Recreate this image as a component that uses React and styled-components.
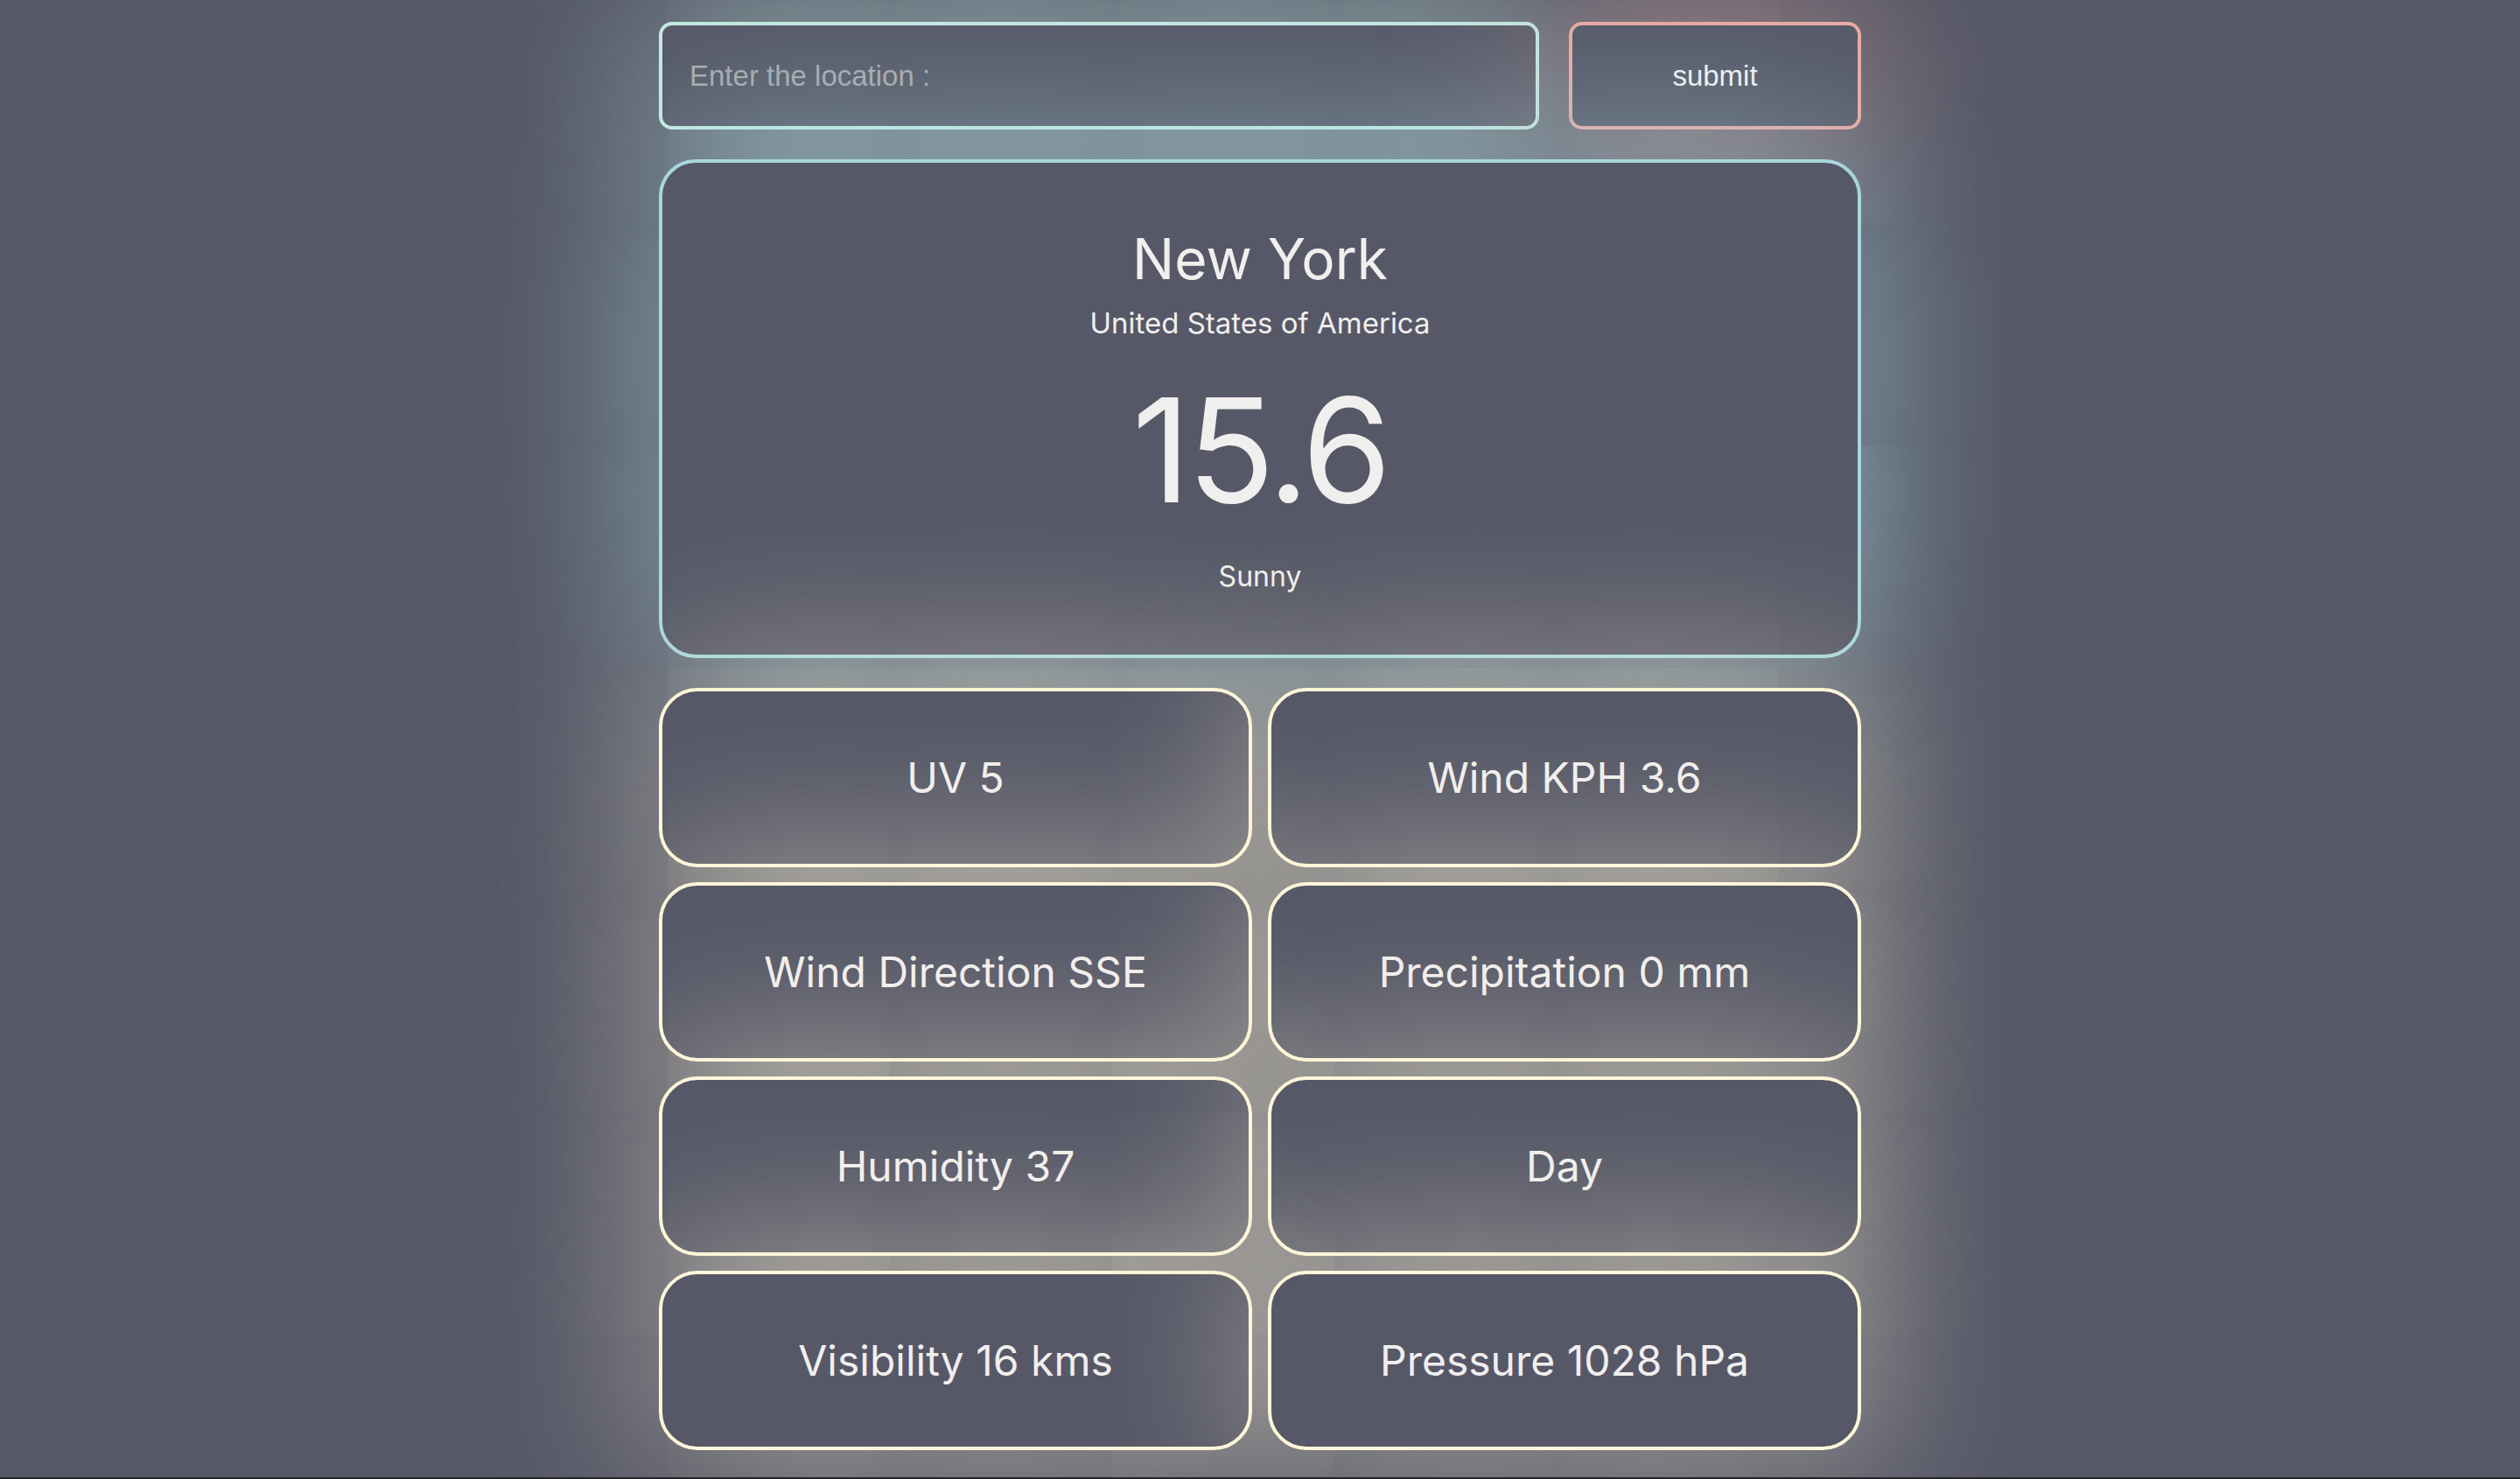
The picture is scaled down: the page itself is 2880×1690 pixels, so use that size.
import styled, { createGlobalStyle } from "styled-components";

const GlobalStyle = createGlobalStyle`
  html {
    margin: 0;
    padding: 0;
    background-color: #242428;
  }
  body {
    margin: 0;
    padding: 0;
    min-height: 1688px;
    background-color: #565867;
    font-family: "Inter", "Noto Sans", sans-serif;
    color: #f1eeee;
    overflow: hidden;
  }
`;

const Page = styled.div`
  display: flex;
  justify-content: center;
  padding-top: 25px;
`;

const Container = styled.div`
  width: 1374px;
  display: flex;
  flex-direction: column;
  gap: 34px;
`;

const SearchRow = styled.form`
  display: flex;
  gap: 34px;
  height: 123px;
`;

const LocationInput = styled.input`
  flex: 1;
  box-sizing: border-box;
  background-color: #565867;
  border: 4px solid #c3ebe1;
  border-radius: 15px;
  box-shadow: 0 0 200px rgba(195, 235, 225, 0.75);
  padding: 0 31px;
  font-family: "Liberation Sans", "Open Sans", sans-serif;
  font-size: 33px;
  color: #f1eeee;
  outline: none;
  &::placeholder {
    color: #a7a9ad;
  }
`;

const SubmitButton = styled.button`
  width: 334px;
  box-sizing: border-box;
  background-color: #565867;
  border: 4px solid #eaa9a1;
  border-radius: 15px;
  box-shadow: 0 0 200px rgba(234, 169, 161, 0.75);
  font-family: "Liberation Sans", "Open Sans", sans-serif;
  font-size: 33px;
  color: #f4f2f2;
  cursor: pointer;
`;

const MainCard = styled.section`
  height: 570px;
  box-sizing: border-box;
  background-color: #565867;
  border: 4px solid #a8d6dd;
  border-radius: 42px;
  box-shadow: 0 0 200px rgba(168, 214, 221, 0.75);
  display: flex;
  flex-direction: column;
  align-items: center;
  padding-top: 78px;
`;

const City = styled.h1`
  margin: 0;
  font-size: 64px;
  line-height: 1;
  font-weight: 400;
`;

const Country = styled.h2`
  margin: 25px 0 0;
  font-size: 33px;
  line-height: 1;
  font-weight: 400;
`;

const Temperature = styled.div`
  margin-top: 46px;
  font-size: 165px;
  line-height: 1;
  font-weight: 400;
  letter-spacing: -4px;
`;

const Condition = styled.div`
  margin-top: 46px;
  font-size: 32px;
  line-height: 1;
`;

const StatsGrid = styled.div`
  display: grid;
  grid-template-columns: 1fr 1fr;
  column-gap: 18px;
  row-gap: 17px;
`;

const StatCard = styled.div`
  height: 205px;
  box-sizing: border-box;
  background-color: #565867;
  border: 4px solid #fff6d9;
  border-radius: 44px;
  box-shadow: 0 0 200px rgba(255, 246, 217, 0.6);
  display: flex;
  align-items: center;
  justify-content: center;
  font-size: 48px;
`;

const stats = [
  "UV 5",
  "Wind KPH 3.6",
  "Wind Direction SSE",
  "Precipitation 0 mm",
  "Humidity 37",
  "Day",
  "Visibility 16 kms",
  "Pressure 1028 hPa",
];

export default function App() {
  return (
    <>
      <GlobalStyle />
      <Page>
        <Container>
          <SearchRow onSubmit={(e) => e.preventDefault()}>
            <LocationInput type="text" placeholder="Enter the location :" />
            <SubmitButton type="submit">submit</SubmitButton>
          </SearchRow>
          <MainCard>
            <City>New York</City>
            <Country>United States of America</Country>
            <Temperature>15.6</Temperature>
            <Condition>Sunny</Condition>
          </MainCard>
          <StatsGrid>
            {stats.map((s) => (
              <StatCard key={s}>{s}</StatCard>
            ))}
          </StatsGrid>
        </Container>
      </Page>
    </>
  );
}
